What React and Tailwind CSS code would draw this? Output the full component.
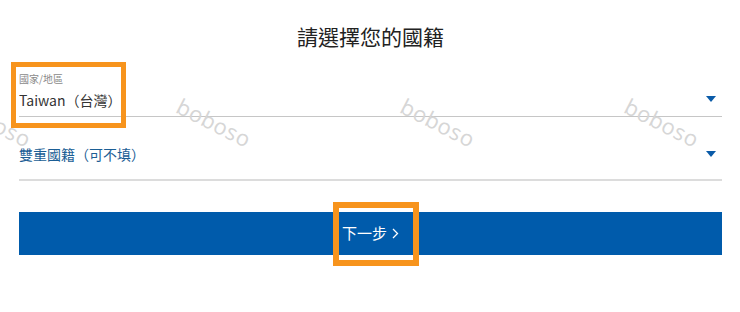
import React from 'react';

const font = { fontFamily: '"Noto Sans CJK TC", "Noto Sans", sans-serif' };

function Caret() {
  return (
    <svg width="10" height="6" viewBox="0 0 10 6" className="shrink-0">
      <path d="M0 0H10L5 6Z" fill="#0a5ba8" />
    </svg>
  );
}

function Chevron() {
  return (
    <svg width="7" height="11" viewBox="0 0 7 11" className="shrink-0">
      <path d="M1 1L5.5 5.5L1 10" fill="none" stroke="white" strokeWidth="1.3" />
    </svg>
  );
}

function Watermark({ className }) {
  return (
    <span
      className={`absolute text-[22px] tracking-[0.5px] text-[#d6d6d6] rotate-[27deg] select-none pointer-events-none ${className}`}
      style={{ fontFamily: '"Open Sans", sans-serif' }}
    >
      boboso
    </span>
  );
}

export default function App() {
  return (
    <div className="relative w-[740px] h-[312px] bg-white overflow-hidden" style={font}>
      <div className="px-[19px] pr-[18px]">
        <h1 className="pt-[20px] h-[64px] text-center text-[21px] leading-[32px] text-[#222]">請選擇您的國籍</h1>

        <div className="flex items-end h-[53px] border-b border-[#c6c6c6]">
          <div className="flex-1 pb-[6px]">
            <div className="text-[10px] leading-[14px] text-[#8a8a8a]">國家/地區</div>
            <div className="mt-[4px] text-[14px] leading-[20px] text-[#333]">Taiwan（台灣）</div>
          </div>
          <div className="pb-[14px] pr-[6px]"><Caret /></div>
        </div>

        <div className="flex items-center h-[64px] pt-[1px] border-b-2 border-[#dcdcdc]">
          <div className="flex-1 text-[14px] leading-[20px] text-[#1b5e95] pt-[10px]">雙重國籍（可不填）</div>
          <div className="pr-[6px] pt-[10px]"><Caret /></div>
        </div>

        <button className="mt-[31px] w-full h-[43px] bg-[#005bab] text-white text-[15px] flex items-center justify-center gap-[5px]">
          <span>下一步</span>
          <Chevron />
        </button>
      </div>

      <Watermark className="left-[-46px] top-[106px]" />
      <Watermark className="left-[174px] top-[106px]" />
      <Watermark className="left-[398px] top-[106px]" />
      <Watermark className="left-[622px] top-[106px]" />

      <div className="absolute left-[11px] top-[62px] w-[115px] h-[66px] border-[5px] border-[#f7941d]" />
      <div className="absolute left-[333px] top-[202px] w-[86px] h-[64px] border-[6px] border-[#f7941d]" />
    </div>
  );
}
